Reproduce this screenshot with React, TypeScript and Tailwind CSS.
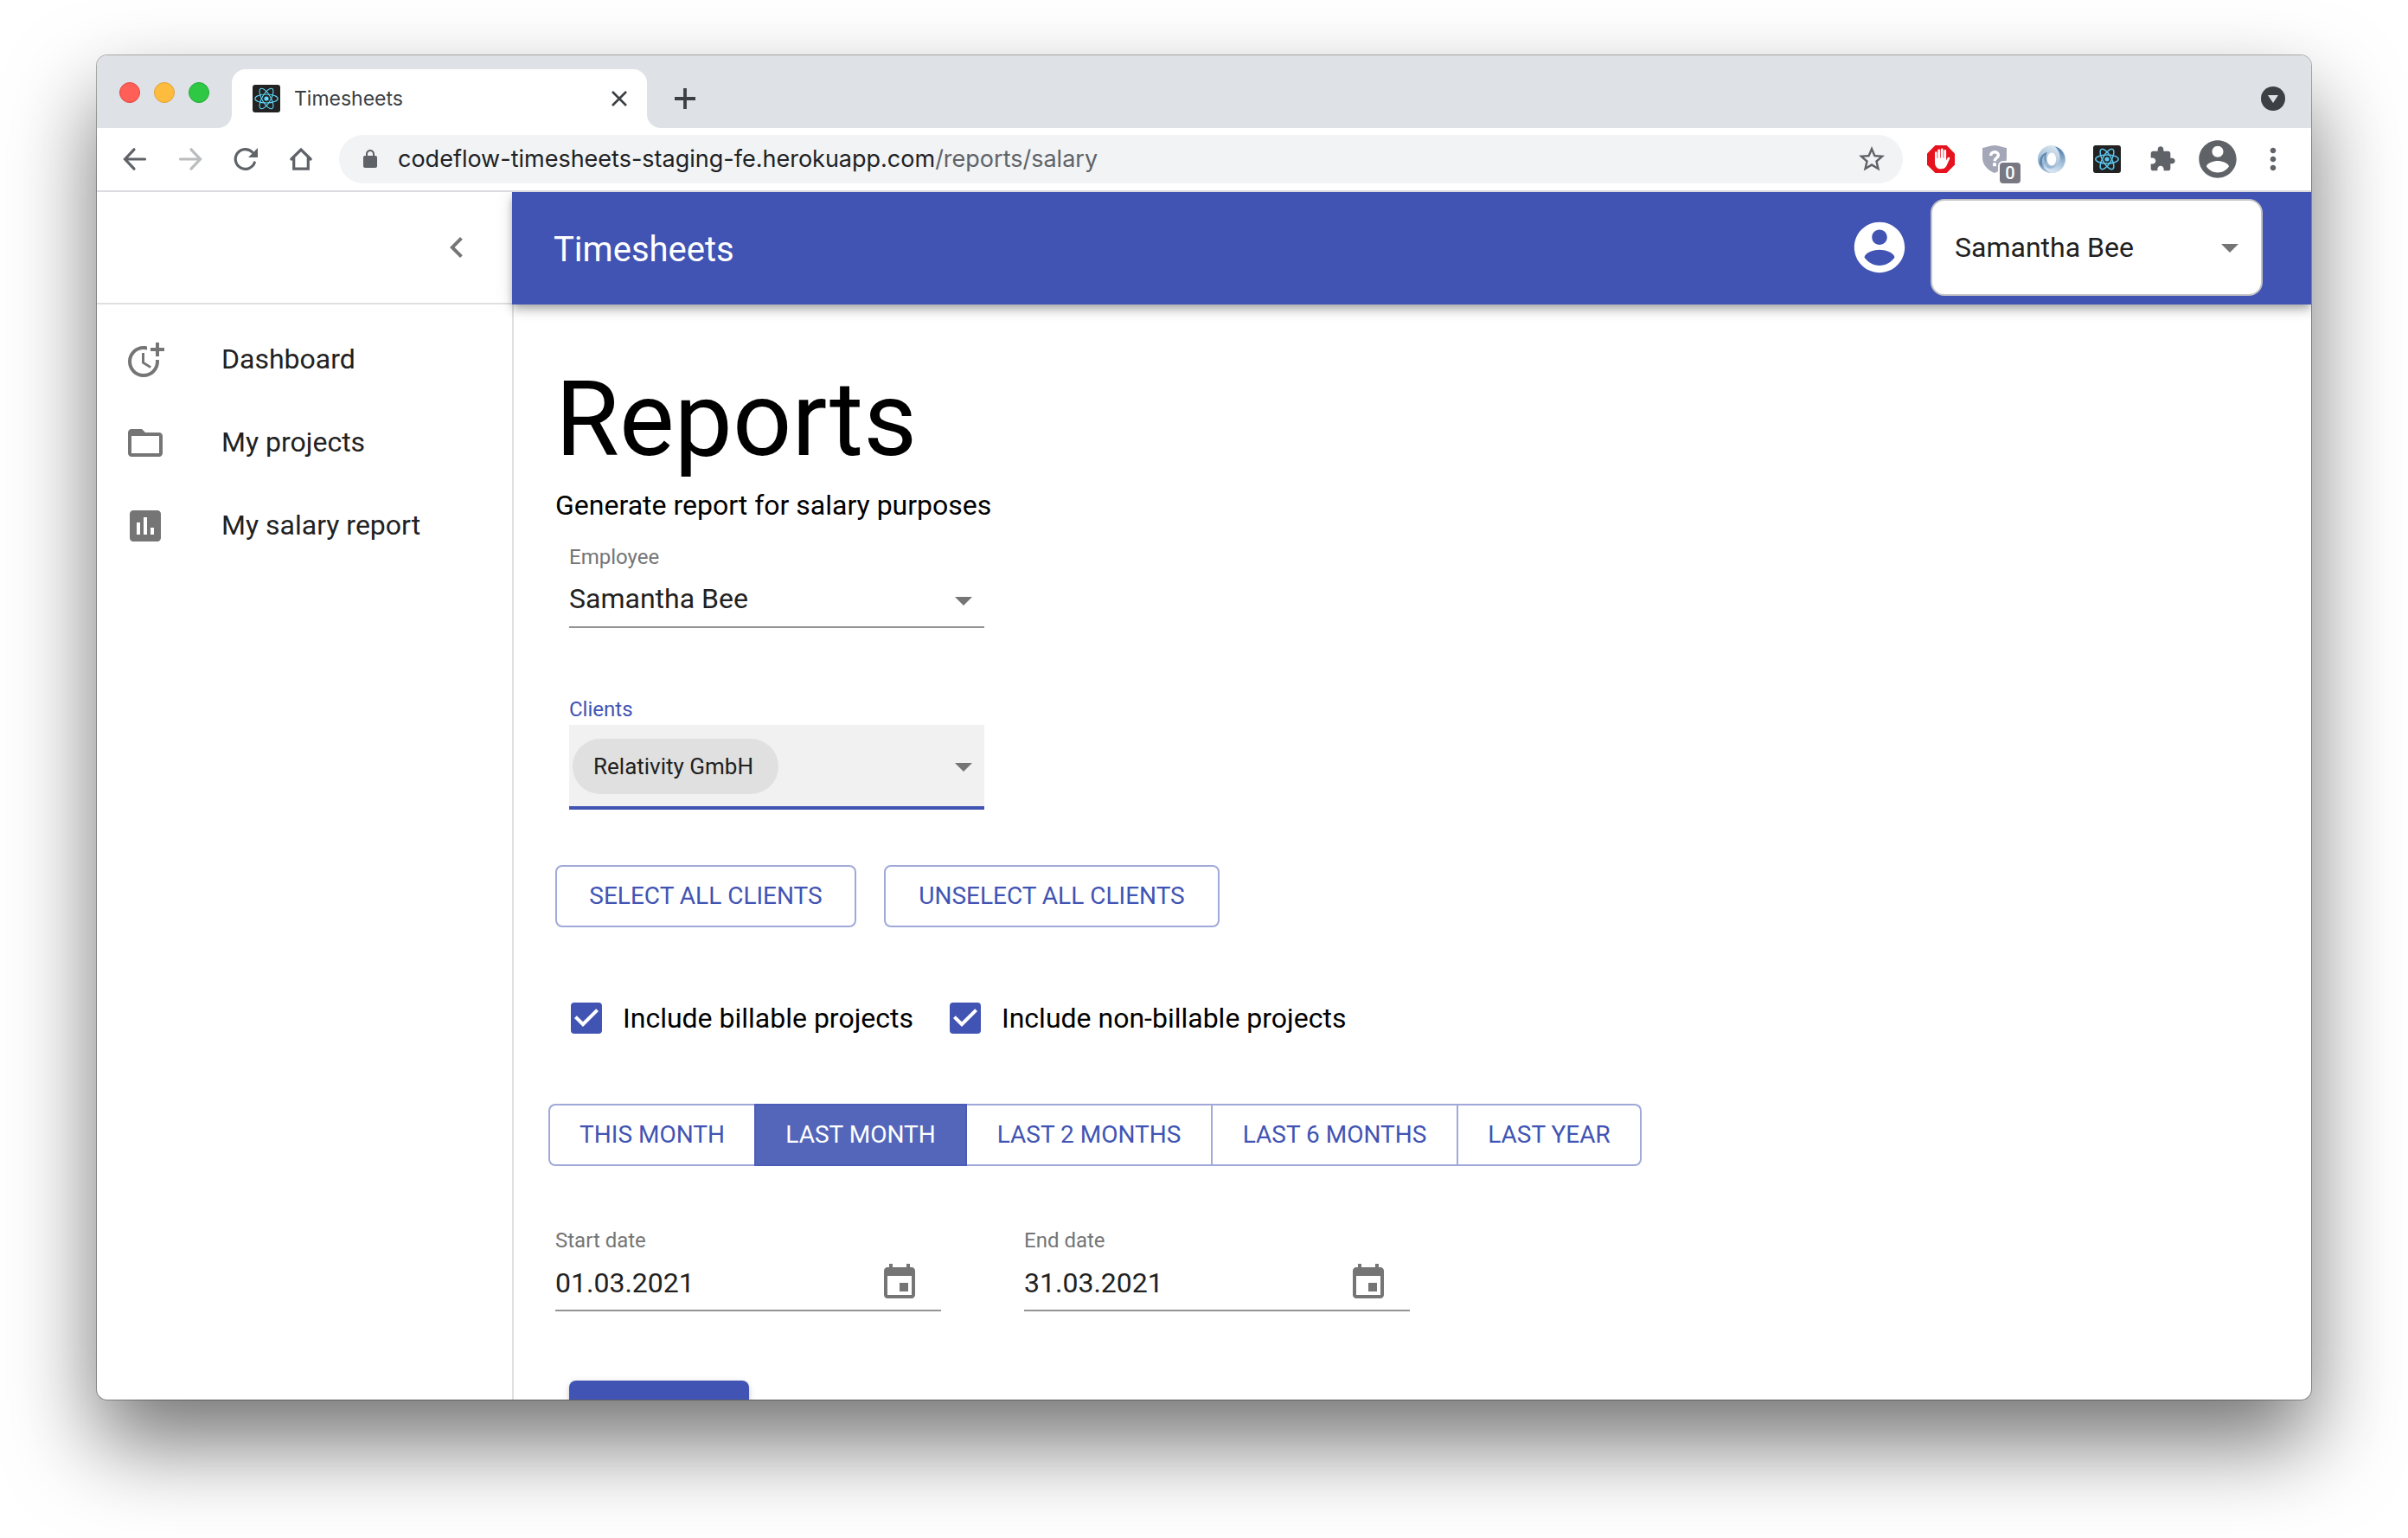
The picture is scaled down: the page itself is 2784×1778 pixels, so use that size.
import React from "react";

function Icon({ d, className }: { d: string; className?: string }) {
  return (
    <svg viewBox="0 0 24 24" fill="currentColor" aria-hidden="true" className={"shrink-0 " + (className ?? "size-12")}>
      <path d={d} />
    </svg>
  );
}

const ICONS = {
  lock: "M18 8h-1V6c0-2.760-2.240-5-5-5S7 3.240 7 6v2H6c-1.100 0-2 .9-2 2v10c0 1.100.9 2 2 2h12c1.100 0 2-.9 2-2V10c0-1.100-.9-2-2-2zM9 6c0-1.660 1.340-3 3-3s3 1.340 3 3v2H9V6z",
  star: "M22 9.24l-7.19-.62L12 2 9.19 8.63 2 9.24l5.46 4.73L5.82 21 12 17.27 18.18 21l-1.63-7.03L22 9.24zM12 15.4l-3.76 2.27 1-4.28-3.32-2.88 4.38-.38L12 6.1l1.71 4.04 4.38.38-3.32 2.88 1 4.28L12 15.4z",
  puzzle:
    "M20.5 11H19V7c0-1.1-.9-2-2-2h-4V3.5C13 2.12 11.88 1 10.5 1S8 2.12 8 3.5V5H4c-1.1 0-1.99.9-1.99 2v3.8H3.5c1.49 0 2.7 1.21 2.7 2.7s-1.21 2.7-2.7 2.7H2V20c0 1.1.9 2 2 2h3.8v-1.5c0-1.49 1.21-2.7 2.7-2.7 1.49 0 2.7 1.21 2.7 2.7V22H17c1.1 0 2-.9 2-2v-4h1.5c1.38 0 2.5-1.12 2.5-2.5S21.88 11 20.5 11z",
  account:
    "M12 2C6.48 2 2 6.48 2 12s4.48 10 10 10 10-4.48 10-10S17.52 2 12 2zm0 3c1.66 0 3 1.34 3 3s-1.34 3-3 3-3-1.34-3-3 1.34-3 3-3zm0 14.2c-2.5 0-4.71-1.28-6-3.22.03-1.99 4-3.08 6-3.08 1.99 0 5.97 1.09 6 3.08-1.29 1.94-3.5 3.22-6 3.22z",
  more: "M12 8c1.1 0 2-.9 2-2s-.9-2-2-2-2 .9-2 2 .9 2 2 2zm0 2c-1.1 0-2 .9-2 2s.9 2 2 2 2-.9 2-2-.9-2-2-2zm0 6c-1.1 0-2 .9-2 2s.9 2 2 2 2-.9 2-2-.9-2-2-2z",
  chevronLeft: "M15.41 7.41L14 6l-6 6 6 6 1.41-1.41L10.83 12z",
  dropDown: "M7 10l5 5 5-5z",
  moreTime:
    "M10 8v6l4.7 2.9.8-1.2-4-2.4V8zM17.92 12c.05.33.08.66.08 1 0 3.9-3.1 7-7 7s-7-3.1-7-7 3.1-7 7-7c.7 0 1.37.1 2 .29V4.23c-.64-.15-1.31-.23-2-.23-5 0-9 4-9 9s4 9 9 9 9-4 9-9c0-.34-.02-.67-.06-1h-2.02zM20 5V2h-2v3h-3v2h3v3h2V7h3V5z",
  folder:
    "M20 6h-8l-2-2H4c-1.1 0-1.99.9-1.99 2L2 18c0 1.1.9 2 2 2h16c1.1 0 2-.9 2-2V8c0-1.1-.9-2-2-2zm0 12H4V8h16v10z",
  assessment:
    "M19 3H5c-1.1 0-2 .9-2 2v14c0 1.1.9 2 2 2h14c1.1 0 2-.9 2-2V5c0-1.1-.9-2-2-2zM9 17H7v-7h2v7zm4 0h-2V7h2v10zm4 0h-2v-4h2v4z",
  event:
    "M17 12h-5v5h5v-5zM16 1v2H8V1H6v2H5c-1.11 0-1.99.9-1.99 2L3 19c0 1.1.89 2 2 2h14c1.1 0 2-.9 2-2V5c0-1.1-.9-2-2-2h-1V1h-2zm3 18H5V8h14v11z",
};

function NavIcon({ children }: { children: React.ReactNode }) {
  return (
    <svg
      viewBox="0 0 40 40"
      aria-hidden="true"
      className="size-10"
      fill="none"
      stroke="currentColor"
      strokeWidth="3.2"
      strokeLinecap="round"
    >
      {children}
    </svg>
  );
}

function ReactLogo({ color, stroke, className }: { color: string; stroke: string; className: string }) {
  return (
    <svg viewBox="0 0 32 32" aria-hidden="true" className={"shrink-0 " + className}>
      <rect width="32" height="32" rx="3" fill="#222" />
      <circle cx="16" cy="16" r="2.6" fill={color} />
      <g fill="none" stroke={color} strokeWidth={stroke}>
        <ellipse cx="16" cy="16" rx="13.2" ry="5" />
        <ellipse cx="16" cy="16" rx="13.2" ry="5" transform="rotate(60 16 16)" />
        <ellipse cx="16" cy="16" rx="13.2" ry="5" transform="rotate(120 16 16)" />
      </g>
    </svg>
  );
}

function BlockerIcon() {
  return (
    <svg viewBox="0 0 32 32" aria-hidden="true" className="size-8">
      <path d="M9.4 0h13.2L32 9.4v13.2L22.6 32H9.4L0 22.6V9.4z" fill="#e6121d" />
      <path
        d="M9 8.500a1.300 1.300 0 0 1 2.600 0V15h.7V6a1.400 1.400 0 0 1 2.800 0v8.500h.7V5a1.400 1.400 0 0 1 2.800 0v9.500h.7V6.500a1.400 1.400 0 0 1 2.800 0V17.500l1.400-2.800c.7-1.300 2.500-1.200 2.900 0L23 22.500c-1 2.800-3.200 4.800-6.800 4.800-4.400 0-7.200-2.800-7.200-7.400z"
        fill="#fff"
      />
    </svg>
  );
}

function ShieldIcon() {
  return (
    <span className="relative block size-8">
      <svg viewBox="0 0 32 32" aria-hidden="true" className="size-8">
        <path d="M0 3C5 2.500 9 0 14 0s9 2.500 14 3v11c0 8-5 14-14 18C5 28 0 22 0 14z" fill="#a3a7b7" />
        <path d="M9.600 12c0-5.500 8.800-5.500 8.800-.8 0 3.300-4.200 3.300-4.200 7" fill="none" stroke="#fff" strokeWidth="3.400" />
        <rect x="12" y="20.200" width="4" height="4" fill="#fff" />
      </svg>
      <span className="absolute left-5 top-5 flex size-6 items-center justify-center rounded bg-[#787883] text-xl font-medium leading-6 text-white ring-2 ring-white">
        0
      </span>
    </span>
  );
}

function RingIcon() {
  return (
    <svg viewBox="0 0 32 32" aria-hidden="true" className="size-8">
      <defs>
        <linearGradient id="ringLeft" x1=".2" y1="1" x2=".8" y2="0">
          <stop offset="0" stopColor="#7ea3c6" />
          <stop offset=".4" stopColor="#a9c2da" />
          <stop offset="1" stopColor="#e2ecf5" />
        </linearGradient>
        <linearGradient id="ringRight" x1=".5" y1="0" x2=".3" y2="1">
          <stop offset="0" stopColor="#4d7ba8" />
          <stop offset=".5" stopColor="#9ebbd7" />
          <stop offset="1" stopColor="#dfeaf5" />
        </linearGradient>
      </defs>
      <circle cx="16" cy="16" r="16" fill="url(#ringLeft)" />
      <path d="M20 1.500A15.500 15.500 0 0 1 16 32C10 31 6.500 27 7 21c3 6 8 7.500 13 4C27 20 28 9 20 1.500z" fill="url(#ringRight)" />
      <path d="M2 22C1 15 5 9 11 8c-2 3-2.500 8-1 13-3-3-3-8-2-10-3 3-4 7-2 15z" fill="#5f88b0" />
      <ellipse cx="16" cy="16" rx="5.200" ry="7.600" fill="#fff" />
    </svg>
  );
}

function BrowserChrome() {
  return (
    <header>
      <div className="flex h-[84px] items-end bg-[#dee1e6] pl-[26px]">
        <div className="mb-[29px] flex gap-4">
          <span className="size-6 rounded-full border border-[#e2463f] bg-[#ff5f57]" />
          <span className="size-6 rounded-full border border-[#e0a135] bg-[#febc3f]" />
          <span className="size-6 rounded-full border border-[#1eab34] bg-[#2fc845]" />
        </div>
        <svg viewBox="0 0 16 16" aria-hidden="true" className="ml-[10px] size-4 shrink-0 fill-white">
          <path d="M16 0v16H0A16 16 0 0 0 16 0z" />
        </svg>
        <div className="flex h-[68px] w-[480px] items-center rounded-t-2xl bg-white pl-6 pr-5">
          <ReactLogo color="#61dafb" stroke="1.1" className="size-8" />
          <span className="ml-4 flex-1 font-['Inter',sans-serif] text-[23px] leading-8 text-[#3c4043]">Timesheets</span>
          <button aria-label="Close tab" className="text-[#3c4043]">
            <svg viewBox="0 0 24 24" className="size-6" stroke="currentColor" strokeWidth="2.6">
              <path d="M4 4l16 16M20 4L4 20" />
            </svg>
          </button>
        </div>
        <svg viewBox="0 0 16 16" aria-hidden="true" className="size-4 shrink-0 fill-white">
          <path d="M0 0v16h16A16 16 0 0 1 0 0z" />
        </svg>
        <button aria-label="New tab" className="mb-[22px] ml-4 text-[#3c4043]">
          <svg viewBox="0 0 24 24" className="size-6" stroke="currentColor" strokeWidth="3.8">
            <path d="M12 0v24M0 12h24" />
          </svg>
        </button>
        <button aria-label="Search tabs" className="mb-5 ml-auto mr-[30px]">
          <svg viewBox="0 0 28 28" className="size-7">
            <circle cx="14" cy="14" r="14" fill="#3c4043" />
            <path d="M8 10h12l-6 9z" fill="#dee1e6" />
          </svg>
        </button>
      </div>
      <div className="flex h-[74px] items-center border-b-2 border-[#dadce0] bg-white pl-6 pr-6 text-[#5f6368]">
        <div className="flex gap-6">
          <button aria-label="Back">
            <NavIcon><path d="M31.500 20H9M19 8.800L8.500 20 19 31.200" /></NavIcon>
          </button>
          <button aria-label="Forward" className="text-[#babcbe]">
            <NavIcon><path d="M8.500 20H31M21 8.800L31.500 20 21 31.200" /></NavIcon>
          </button>
          <button aria-label="Reload">
            <NavIcon>
              <path d="M30.300 24A11.400 11.400 0 1 1 27.800 12" />
              <path d="M34 7v11H23z" fill="currentColor" stroke="none" />
            </NavIcon>
          </button>
          <button aria-label="Home">
            <NavIcon><path d="M8.800 20L20 9l11.200 11M11.700 18.500v12.700h16.600V18.500" /></NavIcon>
          </button>
        </div>
        <div className="ml-6 flex h-14 flex-1 items-center rounded-full bg-[#f1f3f4] pl-6 pr-[18px]">
          <Icon d={ICONS.lock} className="size-6" />
          <span className="ml-5 flex-1 font-['Inter',sans-serif] text-[27px] leading-8 text-[#5f6368]">
            <span className="text-[#202124]">codeflow-timesheets-staging-fe.herokuapp.com</span>/reports/salary
          </span>
          <button aria-label="Bookmark"><Icon d={ICONS.star} className="size-9" /></button>
        </div>
        <div className="ml-7 flex items-center gap-8">
          <BlockerIcon />
          <ShieldIcon />
          <RingIcon />
          <ReactLogo color="#5bc4ec" stroke="1.5" className="size-8" />
        </div>
        <button aria-label="Extensions" className="ml-8"><Icon d={ICONS.puzzle} className="size-8" /></button>
        <button aria-label="Profile" className="ml-[22px]"><Icon d={ICONS.account} className="size-[52px]" /></button>
        <button aria-label="Menu" className="ml-[18px]"><Icon d={ICONS.more} className="size-10" /></button>
      </div>
    </header>
  );
}

function Sidebar() {
  const items = [
    { label: "Dashboard", icon: ICONS.moreTime },
    { label: "My projects", icon: ICONS.folder },
    { label: "My salary report", icon: ICONS.assessment },
  ];
  return (
    <nav className="w-[480px] shrink-0">
      <div className="flex h-[130px] items-center justify-end border-b-2 border-[#e0e0e0] pr-10">
        <button aria-label="Collapse menu" className="text-[#757575]"><Icon d={ICONS.chevronLeft} /></button>
      </div>
      <ul className="py-4">
        {items.map((item) => (
          <li key={item.label}>
            <a href="#" className="flex h-24 items-center gap-16 px-8 text-[#757575]">
              <Icon d={item.icon} />
              <span className="pb-0.5 text-[32px] leading-12 text-[#212121]">{item.label}</span>
            </a>
          </li>
        ))}
      </ul>
    </nav>
  );
}

function AppBar() {
  return (
    <div className="relative z-10 flex h-[130px] items-center bg-[#4154b3] pb-0.5 pl-12 pr-14 shadow-[0_4px_8px_-2px_rgba(0,0,0,0.2),0_8px_10px_0_rgba(0,0,0,0.14),0_2px_20px_0_rgba(0,0,0,0.12)]">
      <span className="flex-1 pt-1.5 text-[40px] leading-16 text-white">Timesheets</span>
      <Icon d={ICONS.account} className="size-[70px] text-white" />
      <div className="relative ml-6 w-96">
        <select
          aria-label="Current user"
          className="block h-28 w-full appearance-none rounded-2xl border-2 border-[#c4c4c4] bg-white px-[26px] text-[32px] text-[#212121]"
        >
          <option>Samantha Bee</option>
        </select>
        <span className="pointer-events-none absolute inset-y-0 right-3.5 flex items-center text-[#757575]">
          <Icon d={ICONS.dropDown} />
        </span>
      </div>
    </div>
  );
}

function Check({ label }: { label: string }) {
  return (
    <label className="flex items-center gap-6 text-[32px] leading-12">
      <span className="relative size-9">
        <input type="checkbox" defaultChecked className="block size-9 appearance-none rounded bg-[#4154b3]" />
        <svg viewBox="3 3 18 18" aria-hidden="true" className="pointer-events-none absolute inset-0 size-9 fill-white">
          <path d="M10 17l-5-5 1.410-1.410L10 14.170l7.590-7.590L19 8l-9 9z" />
        </svg>
      </span>
      {label}
    </label>
  );
}

function DateField({ id, label, value }: { id: string; label: string; value: string }) {
  return (
    <div className="w-[446px]">
      <label htmlFor={id} className="block text-2xl leading-8 text-[#757575]">{label}</label>
      <div className="flex h-[66px] items-center border-b-2 border-[#949494] pr-6 pt-0.5">
        <input id={id} type="text" defaultValue={value} className="h-12 min-w-0 flex-1 bg-transparent text-[32px] text-[#212121] outline-none" />
        <button aria-label={"Choose " + label.toLowerCase()} className="text-[#757575]"><Icon d={ICONS.event} /></button>
      </div>
    </div>
  );
}

const OUTLINED = "h-[72px] border-2 border-[#a0a9d9] text-[28px] leading-12 text-[#4154b3] ";

function Reports() {
  return (
    <main className="min-h-0 flex-1 border-l-2 border-[#e0e0e0] pl-12 pt-14 text-black">
      <h1 className="h-36 text-[120px] leading-[154px]">Reports</h1>
      <p className="mt-2 text-[32px] leading-12">Generate report for salary purposes</p>

      <div className="ml-4 mt-5 w-[480px]">
        <label htmlFor="employee" className="block text-2xl leading-8 text-[#757575]">Employee</label>
        <div className="relative">
          <select id="employee" className="block h-[66px] w-full appearance-none border-b-2 border-[#949494] text-[32px] text-[#212121]">
            <option>Samantha Bee</option>
          </select>
          <span className="pointer-events-none absolute right-0 top-2.5 text-[#757575]"><Icon d={ICONS.dropDown} /></span>
        </div>
      </div>

      <div className="ml-4 mt-[78px] w-[480px]">
        <span id="clients-label" className="block text-2xl leading-8 text-[#4154b3]">Clients</span>
        <button
          aria-labelledby="clients-label"
          aria-haspopup="listbox"
          className="mt-0.5 flex h-[98px] w-full items-center justify-between border-b-4 border-[#4154b3] bg-[#f1f1f1] pl-1 pt-0.5"
        >
          <span className="flex h-16 w-[238px] items-center rounded-full bg-[#e0e0e0] px-6 text-[26px] text-[#212121]">Relativity GmbH</span>
          <Icon d={ICONS.dropDown} className="size-12 text-[#757575]" />
        </button>
      </div>

      <div className="mt-16 flex gap-8">
        <button className={OUTLINED + "w-[348px] rounded-lg"}>SELECT ALL CLIENTS</button>
        <button className={OUTLINED + "w-[388px] rounded-lg"}>UNSELECT ALL CLIENTS</button>
      </div>

      <div className="ml-[18px] mt-[81px] flex gap-[42px]">
        <Check label="Include billable projects" />
        <Check label="Include non-billable projects" />
      </div>

      <div className="-ml-2 mt-[75px] flex">
        <button className={OUTLINED + "w-[238px] rounded-l-lg border-r-0"}>THIS MONTH</button>
        <button className="h-[72px] w-[246px] border-2 border-[#4a5cb7] bg-[#5366ba] text-[28px] leading-12 text-white">LAST MONTH</button>
        <button className={OUTLINED + "w-[284px] border-l-0"}>LAST 2 MONTHS</button>
        <button className={OUTLINED + "w-[284px] border-l-0"}>LAST 6 MONTHS</button>
        <button className={OUTLINED + "w-[212px] rounded-r-lg border-l-0"}>LAST YEAR</button>
      </div>

      <div className="mt-[70px] flex gap-24">
        <DateField id="start-date" label="Start date" value="01.03.2021" />
        <DateField id="end-date" label="End date" value="31.03.2021" />
      </div>

      <button
        aria-label="Generate report"
        className="ml-4 mt-20 block h-[72px] w-52 rounded-lg bg-[#4154b3] shadow-[0_6px_2px_-4px_rgba(0,0,0,0.2),0_4px_4px_0_rgba(0,0,0,0.14),0_2px_10px_0_rgba(0,0,0,0.12)]"
      />
    </main>
  );
}

export default function App() {
  return (
    <div className="flex h-screen flex-col bg-white px-28 pb-40 pt-16 font-['Roboto',sans-serif]">
      <div className="flex min-h-0 flex-1 flex-col overflow-hidden rounded-xl bg-white shadow-[0_0_0_1px_rgba(0,0,0,0.3),0_50px_100px_rgba(0,0,0,0.55)]">
        <BrowserChrome />
        <div className="flex min-h-0 flex-1 overflow-hidden">
          <Sidebar />
          <div className="flex min-w-0 flex-1 flex-col">
            <AppBar />
            <Reports />
          </div>
        </div>
      </div>
    </div>
  );
}
